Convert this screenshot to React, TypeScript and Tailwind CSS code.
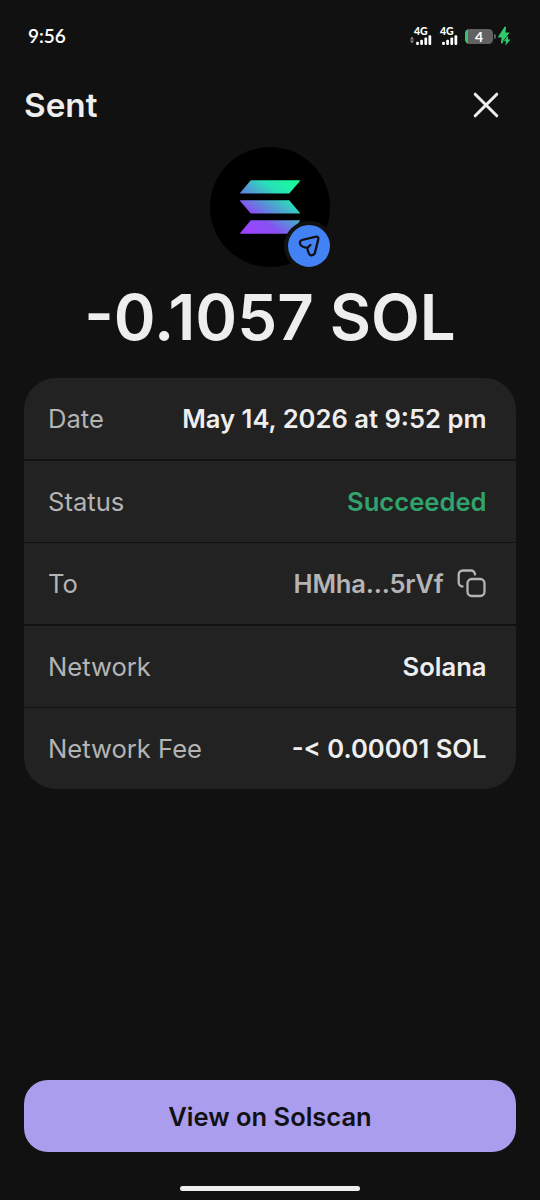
import type { ReactNode } from "react";

type Detail = {
  label: string;
  value: ReactNode;
  valueClass: string;
};

const details: Detail[] = [
  { label: "Date", value: "May 14, 2026 at 9:52 pm", valueClass: "text-[#eeeeee]" },
  { label: "Status", value: "Succeeded", valueClass: "text-[#30a46c]" },
  {
    label: "To",
    value: (
      <>
        <span className="tracking-[-0.2px]">HMha...5rVf</span>
        <CopyIcon />
      </>
    ),
    valueClass: "text-[#b4b4b4]",
  },
  { label: "Network", value: "Solana", valueClass: "text-[#eeeeee]" },
  { label: "Network Fee", value: "-< 0.00001 SOL", valueClass: "text-[#eeeeee]" },
];

function CopyIcon() {
  return (
    <svg
      className="ml-[13px] h-[30px] w-[30px]"
      viewBox="0 0 30 30"
      fill="none"
      stroke="currentColor"
      strokeWidth="2.3"
      strokeLinecap="round"
      aria-hidden="true"
    >
      <path d="M5.5 17.5A4 4 0 0 1 1.7 13.5V5.5A4 4 0 0 1 5.7 1.5H13.7A4 4 0 0 1 18 5.5" />
      <rect x="10.5" y="10" width="17" height="17" rx="4.2" />
    </svg>
  );
}

function SignalIcon() {
  return (
    <div className="flex h-[18px] w-[19px] flex-col">
      <span className="h-[8px] font-['Lato','Noto_Sans',sans-serif] text-[10.5px] leading-[8px] font-black">
        4G
      </span>
      <svg className="h-[11px] w-[19px]" viewBox="0 0 19 11" fill="currentColor" aria-hidden="true">
        <rect x="1.4" y="7.4" width="3" height="3.6" rx="1.1" />
        <rect x="5.9" y="5.2" width="3" height="5.8" rx="1.1" />
        <rect x="10.5" y="2.8" width="3" height="8.2" rx="1.1" />
        <rect x="15" y="0.2" width="3" height="10.8" rx="1.1" />
      </svg>
    </div>
  );
}

function StatusBar() {
  return (
    <div className="flex h-[72px] items-center justify-between pr-[29px] pl-[28px] text-white">
      <span className="font-['Lato','Noto_Sans',sans-serif] text-[19px] font-semibold">9:56</span>
      <div className="flex items-center">
        <svg className="mt-[8px] h-[8px] w-[4px]" viewBox="0 0 4 8" fill="#8a8a8a" aria-hidden="true">
          <path d="M2 0.4 4 3.4H0ZM2 7.6 4 4.6H0Z" />
        </svg>
        <SignalIcon />
        <div className="w-[7px]" />
        <SignalIcon />
        <div className="ml-[6px] flex h-[15px] w-[28px] items-center justify-center rounded-[4.5px] bg-[linear-gradient(90deg,#2fca6c_3px,#626262_3px)] font-['Lato','Noto_Sans',sans-serif] text-[14px] leading-[15px] font-bold">
          4
        </div>
        <div className="ml-px h-[5px] w-[1.5px] rounded-r bg-[#626262]" />
        <svg className="ml-[2.5px] h-[20px] w-[13px]" viewBox="0 0 13 20" fill="#2fca6c" aria-hidden="true">
          <path d="M6.8 0.5Q8.2 0 8 1.6L7.5 6.6H10.6Q11.6 6.8 10.9 7.8L4.4 17.2Q3 18.4 3 16.6L3.6 11.6H0.8Q-0.2 11.2 0.5 10.1Z" />
          <path
            d="M10.1 9.6 5.8 15.2H8.1L7.3 19.8 12.6 13.6H10Z"
            stroke="#111111"
            strokeWidth="1.2"
            paintOrder="stroke"
          />
        </svg>
      </div>
    </div>
  );
}

function TokenAvatar() {
  return (
    <div className="relative mx-auto flex size-[120px] items-center justify-center rounded-full bg-black">
      <svg className="h-[54px] w-[60px]" viewBox="0 0 60 54" aria-hidden="true">
        <defs>
          <linearGradient id="solana" gradientUnits="userSpaceOnUse" x1="8" y1="57" x2="52" y2="-3">
            <stop offset="0.08" stopColor="#9945ff" />
            <stop offset="0.3" stopColor="#8752f3" />
            <stop offset="0.5" stopColor="#5497d5" />
            <stop offset="0.6" stopColor="#43b4ca" />
            <stop offset="0.72" stopColor="#28e0b9" />
            <stop offset="0.97" stopColor="#19fb9b" />
          </linearGradient>
        </defs>
        <path
          fill="url(#solana)"
          d="M10.8 0.3H59.6Q60.2 0.6 59.8 1.2L49.2 13.6H0.4Q-0.2 13.3 0.2 12.7ZM0.4 20.3H49.2L59.8 32.7Q60.2 33.3 59.6 33.6H10.8L0.2 21.2Q-0.2 20.6 0.4 20.3ZM10.8 40.3H59.6Q60.2 40.6 59.8 41.2L49.2 53.8H0.4Q-0.2 53.5 0.2 52.9Z"
        />
      </svg>
      <div className="absolute -right-[4px] -bottom-[4px] flex size-[50px] items-center justify-center rounded-full border-4 border-[#111111] bg-[#4382f5]">
        <svg
          className="size-[42px] shrink-0"
          viewBox="0 0 42 42"
          fill="none"
          stroke="#111111"
          strokeWidth="2.3"
          strokeLinejoin="round"
          strokeLinecap="round"
          aria-hidden="true"
        >
          <path d="M13.9 15 27.2 11.8Q30.9 11.2 30.2 14.6L26.9 28Q25.6 30.6 23 30.4Q20.3 29.6 19.3 22.9Q12.6 21.6 11.9 18.4Q11.7 15.8 13.9 15ZM19.3 22.9 22.4 20" />
        </svg>
      </div>
    </div>
  );
}

function DetailRow({ label, value, valueClass }: Detail) {
  return (
    <div className="flex h-[81px] items-center justify-between bg-[#222222] pt-[2px] pr-[29.5px] pl-[24px] text-[25.6px]">
      <span className="text-[#b4b4b4]">{label}</span>
      <span className={`flex items-center font-semibold ${valueClass}`}>{value}</span>
    </div>
  );
}

export default function App() {
  return (
    <div className="flex h-[1200px] w-[540px] flex-col overflow-hidden bg-[#111111] font-['Inter','Liberation_Sans',sans-serif] whitespace-nowrap">
      <StatusBar />

      <header className="flex h-[66px] items-center justify-between pr-[39px] pl-[24px]">
        <h1 className="pt-[2px] text-[33.3px] font-semibold text-[#eeeeee]">Sent</h1>
        <button aria-label="Close">
          <svg
            className="size-[30px]"
            viewBox="0 0 30 30"
            stroke="#eeeeee"
            strokeWidth="3"
            strokeLinecap="round"
            aria-hidden="true"
          >
            <path d="M4.2 4.2 25.8 25.8M25.8 4.2 4.2 25.8" />
          </svg>
        </button>
      </header>

      <main className="flex flex-1 flex-col px-[24px] pt-[9px]">
        <TokenAvatar />
        <p className="h-[111px] pt-[10px] text-center text-[63.5px] leading-[80px] font-semibold text-[#eeeeee]">
          -0.1057 SOL
        </p>
        <div className="flex flex-col gap-[1.5px] overflow-hidden rounded-[32px]">
          {details.map((detail) => (
            <DetailRow key={detail.label} {...detail} />
          ))}
        </div>
      </main>

      <footer className="flex h-[120px] flex-col items-center px-[24px]">
        <button className="h-[72px] w-full rounded-[24px] bg-[#aa9dee] pt-[2px] text-[25.5px] font-semibold text-[#111111]">
          View on Solscan
        </button>
        <div className="mt-[34px] h-[5px] w-[180px] rounded-full bg-[#f0edf0]" />
      </footer>
    </div>
  );
}
